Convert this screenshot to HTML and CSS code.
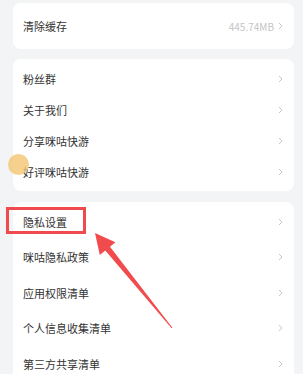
FILE: index.html
```html
<!DOCTYPE html>
<html lang="zh-CN">
<head>
    <meta charset="UTF-8">
    <meta name="viewport" content="width=device-width, initial-scale=1.0">
    <title>设置</title>
    <link rel="stylesheet" href="styles.css">
</head>
<body>

    <div class="page">
        <div class="card card-cache">
            <div class="row">
                <span class="label">清除缓存</span>
                <span class="value">445.74MB</span>
                <svg class="chev" viewBox="0 0 5 8"><polyline points="1,1 4,4 1,7"/></svg>
            </div>
        </div>

        <div class="card card-about">
            <div class="row"><span class="label">粉丝群</span><svg class="chev" viewBox="0 0 5 8"><polyline points="1,1 4,4 1,7"/></svg></div>
            <div class="row"><span class="label">关于我们</span><svg class="chev" viewBox="0 0 5 8"><polyline points="1,1 4,4 1,7"/></svg></div>
            <div class="row"><span class="label">分享咪咕快游</span><svg class="chev" viewBox="0 0 5 8"><polyline points="1,1 4,4 1,7"/></svg></div>
            <div class="row"><span class="label">好评咪咕快游</span><svg class="chev" viewBox="0 0 5 8"><polyline points="1,1 4,4 1,7"/></svg></div>
        </div>

        <div class="card card-privacy">
            <div class="row"><span class="label">隐私设置</span><svg class="chev" viewBox="0 0 5 8"><polyline points="1,1 4,4 1,7"/></svg></div>
            <div class="row"><span class="label">咪咕隐私政策</span><svg class="chev" viewBox="0 0 5 8"><polyline points="1,1 4,4 1,7"/></svg></div>
            <div class="row"><span class="label">应用权限清单</span><svg class="chev" viewBox="0 0 5 8"><polyline points="1,1 4,4 1,7"/></svg></div>
            <div class="row"><span class="label">个人信息收集清单</span><svg class="chev" viewBox="0 0 5 8"><polyline points="1,1 4,4 1,7"/></svg></div>
            <div class="row"><span class="label">第三方共享清单</span><svg class="chev" viewBox="0 0 5 8"><polyline points="1,1 4,4 1,7"/></svg></div>
        </div>

        <!-- floating assistant ball -->
        <div class="float-ball"></div>

        <!-- annotation: box + arrow -->
        <div class="mark-box"></div>
        <svg class="mark-arrow" viewBox="0 0 303 374">
            <polygon points="95,233 115.4,242.3 110,246.7 172.4,327.7 171.6,328.3 105.3,250.5 99.8,254.9"/>
        </svg>
    </div>

</body>
</html>
```

FILE: styles.css
```css
body {
    margin: 0;
    background-color: #f3f4f6;
    font-family: "Noto Sans CJK SC", "Noto Sans", sans-serif;
}

.page {
    position: relative;
    width: 303px;
    height: 374px;
    padding-top: 3px;
    box-sizing: border-box;
    overflow: hidden;
}

.card {
    background-color: #ffffff;
    border-radius: 8px;
    margin: 0 9px 10px 13px;
}

.card-cache {
    height: 46px;
    display: flex;
    align-items: center;
}

.card-cache .row {
    flex: 1;
}

.card-about {
    padding: 4px 0;
    margin-bottom: 11px;
}

.card-about .row {
    height: 31px;
}

.card-privacy {
    padding-top: 2px;
}

.card-privacy .row {
    height: 35.5px;
}

.row {
    display: flex;
    align-items: center;
    padding: 0 11px 0 10px;
}

.label {
    flex: 1;
    font-size: 11px;
    color: #333333;
}

.value {
    font-size: 10px;
    color: #c4c4c4;
    margin-right: 4px;
}

.chev {
    width: 5px;
    height: 8px;
    fill: none;
    stroke: #c8c8c8;
    stroke-width: 1;
}

.float-ball {
    position: absolute;
    left: 8px;
    top: 154px;
    width: 21px;
    height: 21px;
    border-radius: 50%;
    background-color: rgba(244, 196, 112, 0.8);
}

.mark-box {
    position: absolute;
    left: 6px;
    top: 207px;
    width: 80px;
    height: 27px;
    box-sizing: border-box;
    border: 3px solid #ef4a4e;
}

.mark-arrow {
    position: absolute;
    left: 0;
    top: 0;
    width: 303px;
    height: 374px;
    fill: #f14b4d;
}
```
